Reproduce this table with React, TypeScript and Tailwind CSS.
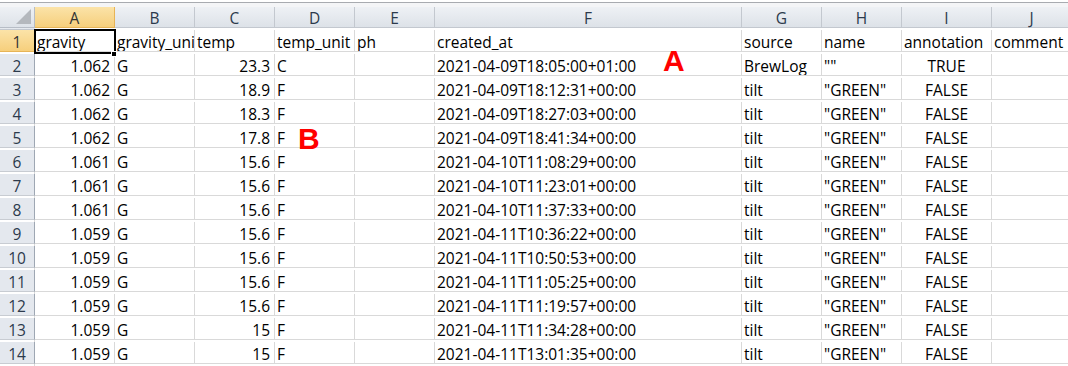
import React from "react";

type Align = "l" | "r" | "c";

const headers = ["A", "B", "C", "D", "E", "F", "G", "H", "I", "J"];
const aligns: Align[] = ["r", "l", "r", "l", "l", "l", "l", "l", "c", "l", "l"];

const times = [
  "2021-04-09T18:05:00+01:00",
  "2021-04-09T18:12:31+00:00",
  "2021-04-09T18:27:03+00:00",
  "2021-04-09T18:41:34+00:00",
  "2021-04-10T11:08:29+00:00",
  "2021-04-10T11:23:01+00:00",
  "2021-04-10T11:37:33+00:00",
  "2021-04-11T10:36:22+00:00",
  "2021-04-11T10:50:53+00:00",
  "2021-04-11T11:05:25+00:00",
  "2021-04-11T11:19:57+00:00",
  "2021-04-11T11:34:28+00:00",
  "2021-04-11T13:01:35+00:00",
];
const grav = ["1.062", "1.062", "1.062", "1.062", "1.061", "1.061", "1.061", "1.059", "1.059", "1.059", "1.059", "1.059", "1.059"];
const temps = ["23.3", "18.9", "18.3", "17.8", "15.6", "15.6", "15.6", "15.6", "15.6", "15.6", "15.6", "15", "15"];

const rows: string[][] = [
  ["gravity", "gravity_unit", "temp", "temp_unit", "ph", "created_at", "source", "name", "annotation", "comment", ""],
  ...times.map((t, i) => [
    grav[i],
    "G",
    temps[i],
    i === 0 ? "C" : "F",
    "",
    t,
    i === 0 ? "BrewLog" : "tilt",
    i === 0 ? '""' : '"GREEN"',
    i === 0 ? "TRUE" : "FALSE",
    "",
    "",
  ]),
];

const gridCols = "grid grid-cols-[35px_80px_80px_80px_80px_80px_307px_80px_80px_90px_80px]";

function alignCls(a: Align, r: number) {
  if (r === 0) return "justify-start pl-[2px]";
  if (a === "r") return "justify-end pr-[4px]";
  if (a === "c") return "justify-center";
  return "justify-start pl-[2px]";
}

export default function App() {
  return (
    <div className="relative w-[1068px] h-[366px] overflow-hidden bg-white text-black font-['Open_Sans',Arial,sans-serif] text-[15.5px] leading-none">
      <div className="h-[2px] bg-white" />
      <div className="h-[1px] bg-[#a8abb0]" />
      <div className="h-[4px] bg-[#f4f5f7]" />
      {/* column headers */}
      <div className={`${gridCols} h-[23px]`}>
        <div className="relative bg-gradient-to-b from-[#eef1f5] to-[#dde2e8] border-r border-b border-[#b7bdc6]">
          <div className="absolute right-[3px] bottom-[3px] w-0 h-0 border-l-[15px] border-l-transparent border-b-[15px] border-b-[#b4b8bd]" />
        </div>
        {headers.map((h, i) => (
          <div
            key={h}
            className={
              i === 0
                ? "flex items-center justify-center pt-[3px] bg-gradient-to-b from-[#fbe3a8] to-[#f6cf7c] border-r border-b border-[#e7b456] text-[#333]"
                : "flex items-center justify-center pt-[3px] bg-gradient-to-b from-[#eef1f5] to-[#dde2e8] border-r border-b border-[#c3c8cf] text-[#2c3a4c]"
            }
          >
            {h}
          </div>
        ))}
        <div className="bg-gradient-to-b from-[#eef1f5] to-[#dde2e8] border-b border-[#c3c8cf]" />
      </div>
      {/* rows */}
      {rows.map((r, ri) => (
        <div key={ri} className={`${gridCols} h-[24px]`}>
          <div
            className={
              ri === 0
                ? "flex items-center justify-center pt-[5px] bg-gradient-to-b from-[#fbe3a8] to-[#f6cf7c] border-r border-b border-r-[#e7b456] border-b-[#e7b456] text-[#333]"
                : "flex items-center justify-center pt-[5px] bg-[#e4e8ee] border-r border-b border-r-[#9ea7b3] border-b-[#c8ccd2] text-[#2c3a4c]"
            }
          >
            {ri + 1}
          </div>
          {r.map((v, ci) => (
            <div
              key={ci}
              className={`flex items-center pt-[5px] overflow-hidden whitespace-nowrap border-r border-b border-[#d9d9d9] ${alignCls(aligns[ci], ri)}`}
            >
              {v}
            </div>
          ))}
        </div>
      ))}
      {/* selected cell */}
      <div className="absolute left-[34px] top-[29px] w-[82px] h-[25px] border-2 border-black" />
      <div className="absolute left-[111px] top-[51px] w-[6px] h-[6px] bg-black border border-white" />
      {/* annotations */}
      <div className="absolute left-[663px] top-[46px] font-['Liberation_Sans',Arial,sans-serif] text-[30px] font-bold text-[#ff0000] leading-none">A</div>
      <div className="absolute left-[298px] top-[124px] font-['Liberation_Sans',Arial,sans-serif] text-[30px] font-bold text-[#ff0000] leading-none">B</div>
    </div>
  );
}
